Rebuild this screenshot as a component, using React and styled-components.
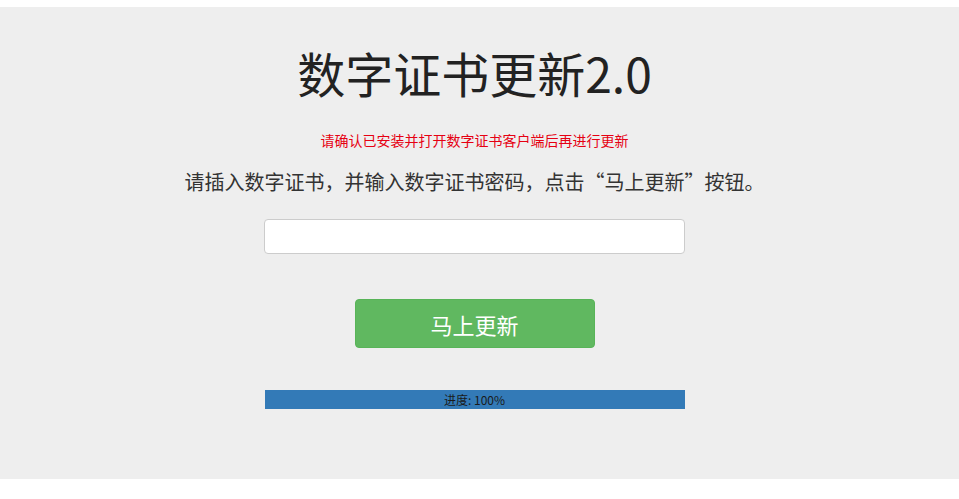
import React from "react";
import styled, { createGlobalStyle } from "styled-components";

const GlobalStyle = createGlobalStyle`
  html, body {
    margin: 0;
    padding: 0;
    background: #fff;
  }
  body {
    font-family: "Noto Sans CJK SC", "Noto Sans", sans-serif;
    color: #333;
  }
`;

const Page = styled.div`
  padding-top: 7px;
  background: #fff;
`;

const Panel = styled.div`
  background: #eeeeee;
  padding: 37px 10px 70px 0;
  display: flex;
  flex-direction: column;
  align-items: center;
`;

const Title = styled.h1`
  margin: 0;
  font-size: 48px;
  line-height: 56px;
  font-weight: 400;
  color: #222;
`;

const Warning = styled.p`
  margin: 30px 0 0;
  font-size: 14px;
  line-height: 20px;
  color: #e60012;
`;

const Hint = styled.p`
  margin: 18px 0 0;
  font-size: 20px;
  line-height: 28px;
  color: #333;
`;

const PasswordInput = styled.input`
  box-sizing: border-box;
  margin-top: 23px;
  width: 421px;
  height: 35px;
  padding: 6px 12px;
  border: 1px solid #ccc;
  border-radius: 4px;
  background: #fff;
  font-size: 14px;
  outline: none;
`;

const UpdateButton = styled.button`
  margin-top: 45px;
  width: 240px;
  height: 49px;
  border: 1px solid #58b458;
  border-radius: 4px;
  background: #60b860;
  color: #fff;
  font-family: inherit;
  font-size: 22px;
  cursor: pointer;
`;

const Track = styled.div`
  margin-top: 42px;
  width: 420px;
  height: 19px;
  background: #f5f5f5;
  overflow: hidden;
`;

const Bar = styled.div`
  height: 100%;
  background: #337ab7;
  color: #1a1a1a;
  font-size: 12px;
  line-height: 19px;
  text-align: center;
`;

export default function App() {
  const progress = 100;
  return (
    <Page>
      <GlobalStyle />
      <Panel>
        <Title>数字证书更新2.0</Title>
        <Warning>请确认已安装并打开数字证书客户端后再进行更新</Warning>
        <Hint>请插入数字证书，并输入数字证书密码，点击“马上更新”按钮。</Hint>
        <PasswordInput type="password" />
        <UpdateButton type="button">马上更新</UpdateButton>
        <Track>
          <Bar style={{ width: `${progress}%` }}>进度: {progress}%</Bar>
        </Track>
      </Panel>
    </Page>
  );
}
